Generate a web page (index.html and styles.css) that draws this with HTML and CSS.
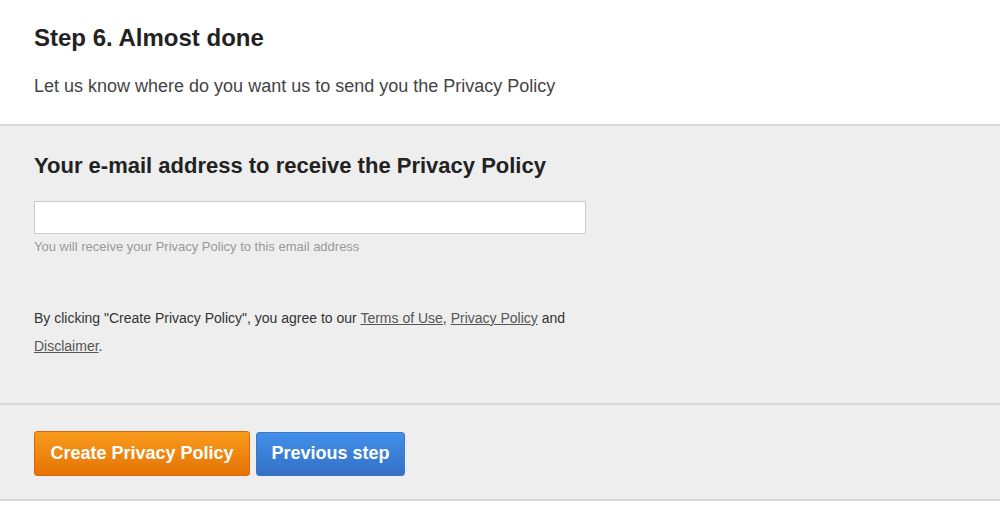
FILE: index.html
```html
<html>
  <head>
    <link rel="stylesheet" href="styles.css">
    <title>Step 6. Almost done</title>
  </head>
  <body>
    <div class="intro">
      <h1>Step 6. Almost done</h1>
      <p>Let us know where do you want us to send you the Privacy Policy</p>
    </div>
    <form>
      <div class="panel">
        <h2>Your e-mail address to receive the Privacy Policy</h2>
        <input type="email" name="email" class="email" />
        <div class="hint">You will receive your Privacy Policy to this email address</div>
        <p class="agree">
          By clicking "Create Privacy Policy", you agree to our
          <a href="#">Terms of Use</a>, <a href="#">Privacy Policy</a> and
          <a href="#">Disclaimer</a>.
        </p>
      </div>
      <div class="actions">
        <button type="submit" class="btn orange">Create Privacy Policy</button>
        <button type="button" class="btn blue">Previous step</button>
      </div>
    </form>
  </body>
</html>
```

FILE: styles.css
```css
body {
  margin: 0;
  font-family: "Liberation Sans", Arial, sans-serif;
  color: #333;
  background: #fff;
}

.intro {
  padding: 24px 34px 27px;
}
.intro h1 {
  margin: 0;
  font-size: 24px;
  line-height: 28px;
  color: #222;
}
.intro p {
  margin: 23px 0 0;
  font-size: 18px;
  line-height: 22px;
  color: #444;
}

form {
  margin: 0;
}

.panel {
  background: #eee;
  border-top: 2px solid #d8d8d8;
  padding: 27px 34px 43px;
}
.panel h2 {
  margin: 0;
  font-size: 22px;
  line-height: 26px;
  color: #222;
}
.email {
  display: block;
  margin-top: 22px;
  width: 552px;
  height: 33px;
  box-sizing: border-box;
  border: 1px solid #ccc;
  background: #fff;
  padding: 4px 8px;
  font: inherit;
}
.hint {
  margin-top: 5px;
  font-size: 13px;
  line-height: 16px;
  color: #999;
}
.agree {
  margin: 49px 0 0;
  font-size: 14px;
  line-height: 28px;
  color: #333;
  max-width: 540px;
}
.agree a {
  color: #555;
}

.actions {
  background: #eee;
  border-top: 2px solid #d8d8d8;
  border-bottom: 2px solid #d8d8d8;
  padding: 26px 34px 23px;
  display: flex;
  gap: 6px;
  align-items: center;
}
.btn {
  font-family: "Liberation Sans", Arial, sans-serif;
  font-size: 18px;
  font-weight: bold;
  color: #fff;
  height: 45px;
  padding: 0;
  white-space: nowrap;
  border-radius: 3px;
  cursor: pointer;
}
.orange {
  background: linear-gradient(#f99b1c, #e57305);
  border: 1px solid #d6670a;
  width: 216px;
}
.blue {
  background: linear-gradient(#4190ea, #3470c6);
  border: 1px solid #3d78c4;
  width: 149px;
  height: 44px;
}
```
